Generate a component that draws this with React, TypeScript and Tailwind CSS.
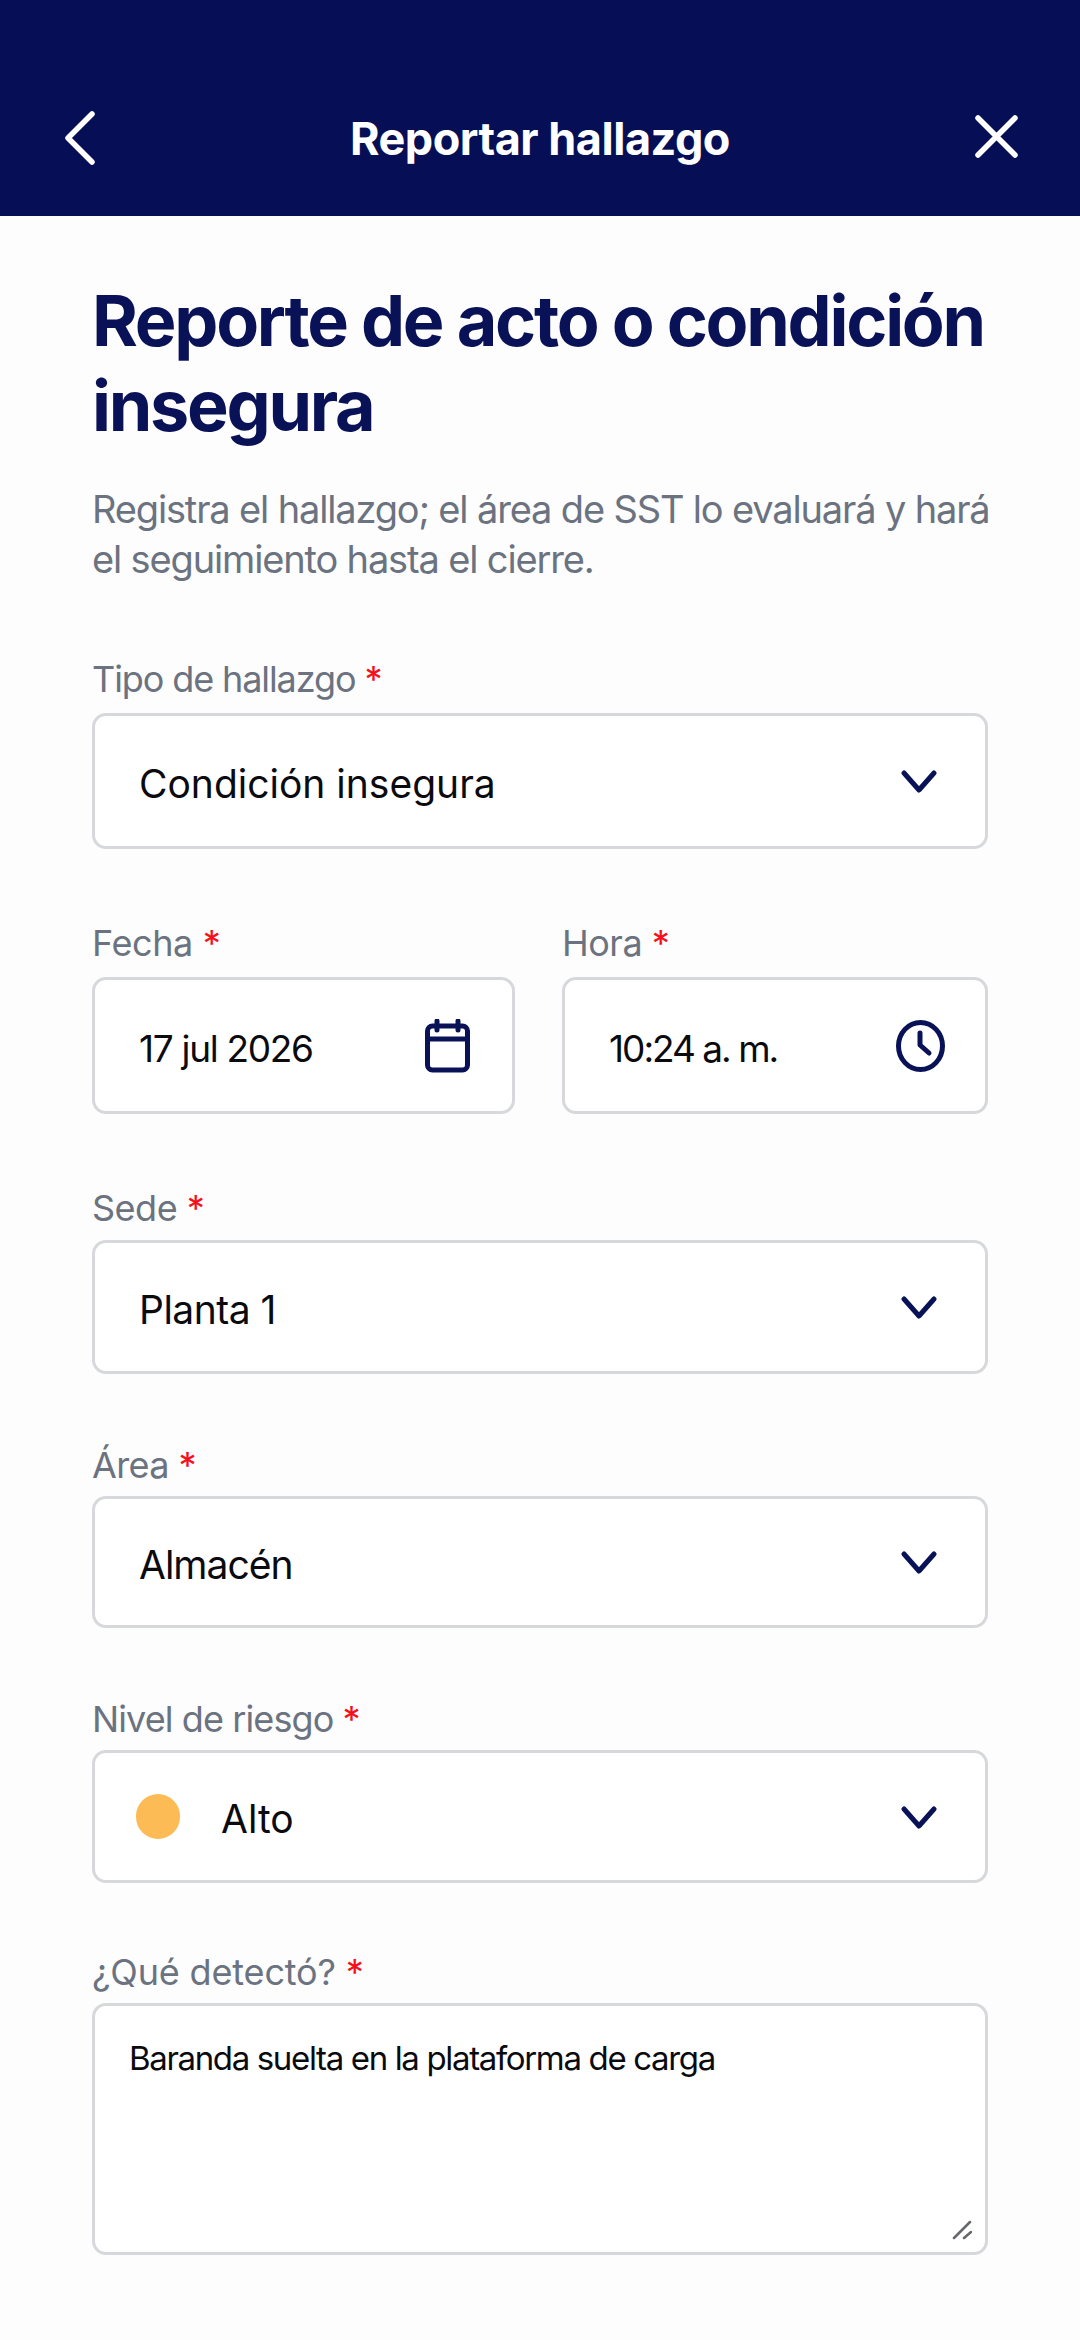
import type { ReactNode } from 'react';

const Chevron = () => (
    <svg className="h-[24px] w-[36px] shrink-0 text-[#0a1257]" viewBox="0 0 36 24" fill="none" stroke="currentColor" strokeWidth="5" strokeLinecap="round" strokeLinejoin="round">
        <path d="M3 4l15 17L33 4" />
    </svg>
);

function Label({ className, children }: { className: string; children: ReactNode }) {
    return (
        <div className={`text-[36px] leading-[44px] text-[#6b7280] ${className}`}>
            {children} <span className="text-[#f5101c]">*</span>
        </div>
    );
}

function SelectBox({ className, children }: { className: string; children: ReactNode }) {
    return (
        <div className={`flex items-center justify-between rounded-[14px] border-[3px] border-[#d6d8db] bg-white pl-[44px] pr-[48px] text-[39px] text-[#0b0b0f] ${className}`}>
            <div className="pt-[6px]">{children}</div>
            <Chevron />
        </div>
    );
}

export default function App() {
    return (
        <div className="min-h-[2340px] w-[1080px] bg-[#fdfdfd] font-['Inter',sans-serif]">
            {/* Top bar */}
            <header className="flex h-[216px] items-center justify-between bg-[#060f55] pl-[65px] pr-[62px] pt-[62px] text-white">
                <svg className="mb-[2px] h-[54px] w-[30px]" viewBox="0 0 30 54" fill="none" stroke="currentColor" strokeWidth="5.5" strokeLinecap="round" strokeLinejoin="round">
                    <path d="M27 3L3 27l24 24" />
                </svg>
                <h1 className="ml-[10px] text-[45px] font-bold tracking-[-0.5px]">Reportar hallazgo</h1>
                <svg className="mb-[6px] h-[43px] w-[43px]" viewBox="0 0 43 43" fill="none" stroke="currentColor" strokeWidth="5.5" strokeLinecap="round">
                    <path d="M3 3l37 37M40 3L3 40" />
                </svg>
            </header>

            <main className="px-[92px] pt-[62px]">
                <h2 className="text-[70px] font-bold leading-[85px] tracking-[-2.25px] text-[#0a1257]">
                    Reporte de acto o condición insegura
                </h2>
                <p className="-mr-[12px] mt-[36px] text-[38px] leading-[50px] tracking-[-1.15px] text-[#6b7280]">
                    Registra el hallazgo; el área de SST lo evaluará y hará el seguimiento hasta el cierre.
                </p>

                <div className="mt-[73px]">
                    <Label className="tracking-[-1.1px]">Tipo de hallazgo</Label>
                    <SelectBox className="mt-[12px] h-[136px]">Condición insegura</SelectBox>
                </div>

                <div className="mt-[72px] flex gap-[47px]">
                    <div className="w-[423px]">
                        <Label className="tracking-[-0.4px]">Fecha</Label>
                        <div className="mt-[12px] flex h-[137px] items-center justify-between rounded-[14px] border-[3px] border-[#d6d8db] bg-white pl-[44px] pr-[42px] text-[37px] tracking-[-1.3px] text-[#0b0b0f]">
                            <div className="pt-[6px]">17 jul 2026</div>
                            <svg className="h-[54px] w-[45px]" viewBox="0 0 45 54" fill="none" stroke="#0a1257" strokeWidth="5" strokeLinecap="round" strokeLinejoin="round">
                                <rect x="2.5" y="7" width="40" height="44" rx="5" />
                                <path d="M3 20h39M12 2v9M33 2v9" />
                            </svg>
                        </div>
                    </div>
                    <div className="w-[426px]">
                        <Label className="tracking-[-0.5px]">Hora</Label>
                        <div className="mt-[12px] flex h-[137px] items-center justify-between rounded-[14px] border-[3px] border-[#d6d8db] bg-white pl-[44px] pr-[40px] text-[37px] tracking-[-2px] text-[#0b0b0f]">
                            <div className="pt-[6px]">10:24 a. m.</div>
                            <svg className="h-[52px] w-[49px]" viewBox="0 0 49 52" fill="none" stroke="#0a1257" strokeWidth="5" strokeLinecap="round" strokeLinejoin="round">
                                <ellipse cx="24.5" cy="26" rx="22" ry="23.5" />
                                <path d="M24 13v12l9 8" />
                            </svg>
                        </div>
                    </div>
                </div>

                <div className="mt-[72px]">
                    <Label className="tracking-[-0.5px]">Sede</Label>
                    <SelectBox className="mt-[10px] h-[134px] tracking-[-0.5px]">Planta 1</SelectBox>
                </div>

                <div className="mt-[69px]">
                    <Label className="tracking-[-0.6px]">Área</Label>
                    <SelectBox className="mt-[9px] h-[132px] tracking-[-1px]">Almacén</SelectBox>
                </div>

                <div className="mt-[69px]">
                    <Label className="tracking-[-0.9px]">Nivel de riesgo</Label>
                    <SelectBox className="mt-[9px] h-[133px]">
                        <div className="-ml-[3px] flex items-center gap-[41px]">
                            <span className="-mt-[6px] h-[45px] w-[44px] rounded-full bg-[#fdbb55]" />
                            Alto
                        </div>
                    </SelectBox>
                </div>

                <div className="mt-[67px]">
                    <Label className="tracking-[-0.15px]">¿Qué detectó?</Label>
                    <div className="relative mt-[9px] h-[252px] rounded-[14px] border-[3px] border-[#d6d8db] bg-white pl-[34px] pt-[30px] text-[33px] leading-[44px] tracking-[-1.35px] text-[#0b0b0f]">
                        Baranda suelta en la plataforma de carga
                        <svg className="absolute bottom-[12px] right-[13px] h-[20px] w-[20px]" viewBox="0 0 20 20" fill="none" stroke="#66686d" strokeWidth="2.5" strokeLinecap="round">
                            <path d="M2 18L18 2M12 18l7-6" />
                        </svg>
                    </div>
                </div>
            </main>
        </div>
    );
}
